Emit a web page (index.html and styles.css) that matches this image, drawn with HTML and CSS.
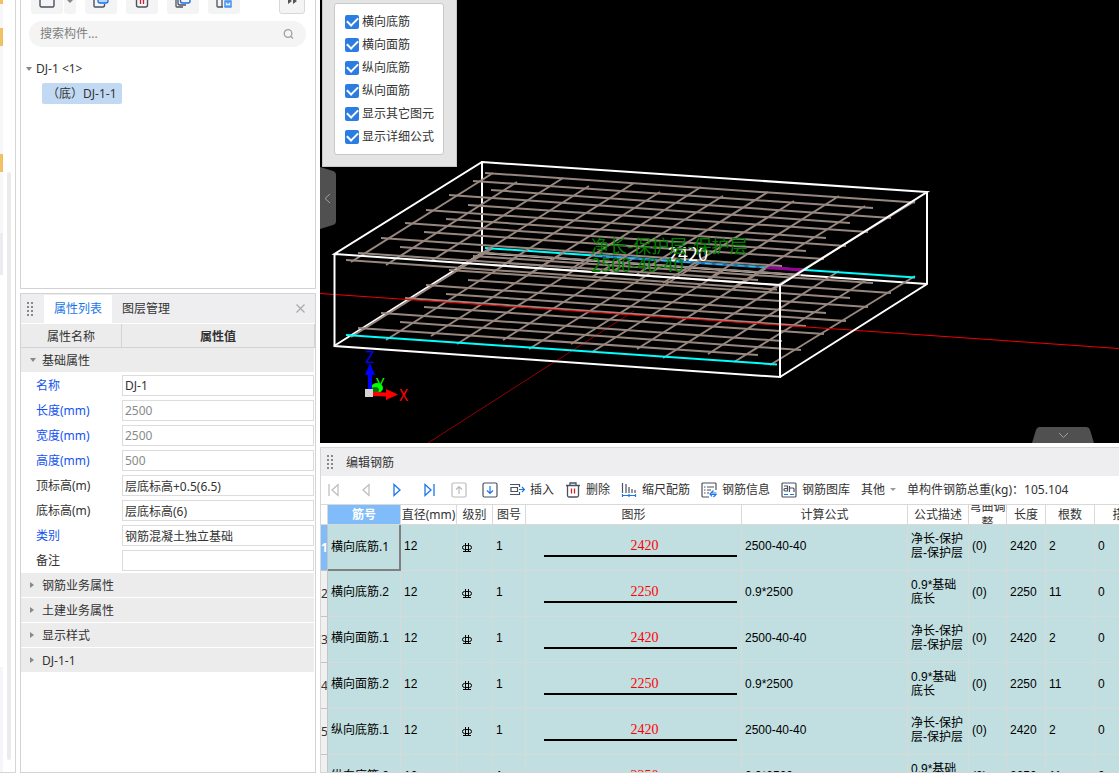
FILE: index.html
```html
<!DOCTYPE html>
<html lang="zh-CN">
<head>
  <meta charset="UTF-8" />
  <title>编辑钢筋</title>
  <link rel="stylesheet" href="styles.css">
</head>
<body>
  <!-- navigation strip -->
  <aside class="strip">
    <div class="strip-items">
      <i class="tag tag-cut"></i>
      <i class="tag"></i>
      <i class="tag tag-low"></i>
      <i class="block"></i>
      <i class="tail"></i>
    </div>
    <div class="scrollbar"></div>
  </aside>

  <div class="side">
    <section class="tree-panel">
      <div class="tree-tools">
        <button class="tool" aria-label="新建"><svg width="16" height="16" viewBox="0 0 16 16"><rect x="1" y="1" width="14" height="14" rx="1.5" fill="none" stroke="#4a5160" stroke-width="1.4"/></svg></button>
        <button class="tool drop" aria-label="更多新建"><svg width="6" height="16" viewBox="0 0 6 16"><path d="M0 8h6L3 11z" fill="#888"/></svg></button>
        <button class="tool" aria-label="复制"><svg width="16" height="16" viewBox="0 0 16 16"><path d="M4 6H1V14q0 1 1 1h8q1.500 0 1.500-2v-1" fill="none" stroke="#4a5160" stroke-width="1.400"/><path d="M5 1h10v8q0 2-2 2H7q-2 0-2-2z" fill="#b9d5fb" stroke="#1b6fe0" stroke-width="1.300"/></svg></button>
        <button class="tool" aria-label="删除"><svg width="16" height="16" viewBox="0 0 16 16"><path d="M2.500 3v10q0 2 2 2h7q2 0 2-2V3M0 3h16" fill="none" stroke="#4a5160" stroke-width="1.400"/><path d="M6.500 5v7M9.500 5v7" stroke="#d81e2c" stroke-width="1.300"/></svg></button>
        <button class="tool" aria-label="层间复制"><svg width="16" height="16" viewBox="0 0 16 16"><path d="M1 6v8q0 1 1 1h6M3 4v7q0 2 2 2h6" fill="none" stroke="#4a5160" stroke-width="1.300"/><path d="M5.500 1h9.500v8q0 2-2 2H7.500q-2 0-2-2z" fill="none" stroke="#1b6fe0" stroke-width="1.400"/></svg></button>
        <button class="tool" aria-label="存档"><svg width="16" height="16" viewBox="0 0 16 16"><path d="M1 1v13q0 1 1 1h5M6 3v12" fill="none" stroke="#4a5160" stroke-width="1.300"/><rect x="9" y="9" width="6" height="6" fill="#e4f0ff" stroke="#2b84ea" stroke-width="1.300"/><path d="M11 9v2h2V9M10 14h4" stroke="#2b84ea" fill="none"/></svg></button>
        <button class="tool more" aria-label="展开"><svg width="10" height="16" viewBox="0 0 10 16"><path d="M1 6l4 3-4 3zM6 6l4 3-4 3z" fill="#555"/></svg></button>
      </div>
      <div class="search">
        <input type="text" placeholder="搜索构件..." aria-label="搜索构件">
        <svg width="12" height="12" viewBox="0 0 12 12" fill="none" stroke="#a0a0a0" stroke-width="1.300"><circle cx="5" cy="5.500" r="3.800"/><path d="M8 8.500l2 2"/></svg>
      </div>
      <ul class="tree">
        <li><svg width="6" height="4" viewBox="0 0 6 4"><path d="M0 0h6L3 4z" fill="#888"/></svg>DJ-1 &lt;1&gt;</li>
        <li class="child"><span class="selected">（底）DJ-1-1</span></li>
      </ul>
    </section>

    <section class="props">
      <header class="dock-head">
        <svg class="grip" width="6" height="14" viewBox="0 0 6 14"><path d="M0 1h2M4 1h2M0 5h2M4 5h2M0 9h2M4 9h2M0 13h2M4 13h2" stroke="#888" stroke-width="2"/></svg>
        <button class="tab active">属性列表</button>
        <button class="tab">图层管理</button>
        <button class="close" aria-label="关闭"><svg width="9" height="9" viewBox="0 0 9 9"><path d="M.5.5l8 8M8.500.5l-8 8" stroke="#aaa" stroke-width="1.200"/></svg></button>
      </header>
      <div class="props-head"><span>属性名称</span><b>属性值</b></div>
      <button class="group open"><i></i>基础属性</button>
      <div class="field"><label class="blue" for="p1">名称</label><input id="p1" type="text" value="DJ-1"></div>
      <div class="field"><label class="blue" for="p2">长度(mm)</label><input id="p2" class="dim" type="text" value="2500"></div>
      <div class="field"><label class="blue" for="p3">宽度(mm)</label><input id="p3" class="dim" type="text" value="2500"></div>
      <div class="field"><label class="blue" for="p4">高度(mm)</label><input id="p4" class="dim" type="text" value="500"></div>
      <div class="field"><label for="p5">顶标高(m)</label><input id="p5" type="text" value="层底标高+0.5(6.5)"></div>
      <div class="field"><label for="p6">底标高(m)</label><input id="p6" type="text" value="层底标高(6)"></div>
      <div class="field"><label class="blue" for="p7">类别</label><input id="p7" type="text" value="钢筋混凝土独立基础"></div>
      <div class="field"><label for="p8">备注</label><input id="p8" type="text" value=""></div>
      <button class="group"><i></i>钢筋业务属性</button>
      <button class="group"><i></i>土建业务属性</button>
      <button class="group"><i></i>显示样式</button>
      <button class="group"><i></i>DJ-1-1</button>
    </section>
  </div>

  <main class="main">
    <section class="viewport">
      <svg class="scene" viewBox="320 0 799 443" preserveAspectRatio="xMinYMin slice">
        <defs>
          <g id="cross">
            <path d="M473 181L873 208M491 190L891 218M449 195L850 223M468 205L868 232M426 210L826 238M446 219L846 246M405 223L806 251M424 232L824 259M381 238L782 266M400 247L801 275M358 253L758 280"/>
          </g>
          <g id="along">
            <path d="M493 173L351 262M517 182L386 265M563 178L431 261M589 186L457 269M634 183L503 265M660 192L529 274M701 187L571 269M723 196L592 277M768 192L637 274M794 201L663 283M839 196L708 279M865 206L734 287M915 201L770 290"/>
          </g>
        </defs>
        <path d="M482 161V253L927 284M482 253L334 346" class="edge"/>
        <path d="M634 311L428 443" stroke="#960000" fill="none"/>
        <g class="bar">
          <use href="#cross" y="75"/>
          <use href="#along" y="75"/>
        </g>
        <path d="M320 293.500L1119 348.500" stroke="#f00000" fill="none"/>
        <path d="M485 248L915 277.500M346 335L777 364.500" class="cyan"/>
        <path d="M595 256L803 270" stroke="#2467ad" stroke-width="2"/>
        <path d="M595 256L803 270" stroke="#3ec4e8" stroke-dasharray="7 4"/>
        <path d="M766 267.500L804 270" stroke="#9b009b" stroke-width="3"/>
        <g class="bar">
          <use href="#cross"/>
          <use href="#along"/>
          <path d="M485 173L915 202.500M346 260L777 289.500"/>
        </g>
        <path d="M482 162L927 192L780 285L334.500 254ZM334.500 254V346L780 377V285M780 377L927 284V192" class="edge"/>
        <text x="668" y="261" fill="#fff">2420</text>
        <text x="591" y="253" fill="#008000">净长-保护层-保护层</text>
        <text x="591" y="272" fill="#008000">2500-40-40</text>
        <!-- axes -->
        <ellipse cx="377" cy="388" rx="6" ry="5" fill="#0f0"/>
        <ellipse cx="375" cy="390" rx="4" ry="3" fill="#087508"/>
        <path d="M368 390V375h-3L370 363l5 12h-3V390z" fill="#00f"/>
        <path d="M373 392l13 .5V389l12 5.500-12 5.500v-3.500l-13-.5z" fill="#f00"/>
        <path d="M365 389h8v8h-8z" fill="#d4d4d4"/>
        <text class="axis" x="365" y="363" fill="#00f">Z</text>
        <text class="axis" x="376" y="390" fill="#0f0">Y</text>
        <text class="axis" x="399" y="401" fill="#f00">X</text>
      </svg>

      <div class="filter">
        <div class="filter-box">
          <label><input type="checkbox" checked>横向底筋</label>
          <label><input type="checkbox" checked>横向面筋</label>
          <label><input type="checkbox" checked>纵向底筋</label>
          <label><input type="checkbox" checked>纵向面筋</label>
          <label><input type="checkbox" checked>显示其它图元</label>
          <label><input type="checkbox" checked>显示详细公式</label>
        </div>
      </div>
      <button class="handle-left" aria-label="收起左侧"><svg width="16" height="62" viewBox="0 0 16 62"><path d="M0 0l13 4q3 1 3 4v46q0 3-3 4L0 62z" fill="#505050"/><path d="M10 27l-5 4.500 5 4.500" fill="none" stroke="#a0a0a0"/></svg></button>
      <button class="handle-bottom" aria-label="收起下方"><svg width="62" height="16" viewBox="0 0 62 16"><path d="M0 16L4 3q1-3 4-3h46q3 0 4 3l4 13z" fill="#505050"/><path d="M27 6l4.500 4.500L36 6" fill="none" stroke="#a0a0a0"/></svg></button>
    </section>

    <section class="editor">
      <header class="dock-head">
        <svg class="grip" width="6" height="14" viewBox="0 0 6 14"><path d="M0 1h2M4 1h2M0 5h2M4 5h2M0 9h2M4 9h2M0 13h2M4 13h2" stroke="#888" stroke-width="2"/></svg>
        <h2>编辑钢筋</h2>
      </header>

      <div class="toolbar">
        <div class="nav">
          <button aria-label="首行"><svg width="16" height="16" viewBox="0 0 16 16" fill="none" stroke="#bbb" stroke-width="1.200"><path d="M2 2v12M11 2.500v11L5 8z"/></svg></button>
          <button aria-label="上一行"><svg width="16" height="16" viewBox="0 0 16 16" fill="none" stroke="#bbb" stroke-width="1.200"><path d="M11 2.500v11L5 8z"/></svg></button>
          <button aria-label="下一行"><svg width="16" height="16" viewBox="0 0 16 16" fill="none" stroke="#1b76e8" stroke-width="1.300"><path d="M5 2.500v11L11 8z"/></svg></button>
          <button aria-label="末行"><svg width="16" height="16" viewBox="0 0 16 16" fill="none" stroke="#1b76e8" stroke-width="1.300"><path d="M5 2.500v11L11 8zM14 2v12"/></svg></button>
          <button aria-label="上移"><svg width="16" height="16" viewBox="0 0 16 16" fill="none" stroke="#bbb" stroke-width="1.200"><rect x="1" y="1" width="14" height="14" rx="1.500"/><path d="M8 12V5M5 7.500l3-3 3 3"/></svg></button>
          <button aria-label="下移"><svg width="16" height="16" viewBox="0 0 16 16" fill="none" stroke-width="1.200"><rect x="1" y="1" width="14" height="14" rx="1.500" stroke="#4a5160"/><path d="M8 4v7M5 8.500l3 3 3-3" stroke="#1b76e8"/></svg></button>
        </div>
        <button><svg width="16" height="16" viewBox="0 0 16 16" fill="none" stroke="#4a5160" stroke-width="1.200"><path d="M11 2.500H1M1 12.500h10M10.500 2v3M10.500 10v3M8.500 5.500H2v4h6.500z"/><path d="M10 7.500h5.500M13 5l2.500 2.500L13 10" stroke="#1b76e8"/></svg>插入</button>
        <button><svg width="16" height="16" viewBox="0 0 16 16" fill="none" stroke="#4a5160" stroke-width="1.300"><path d="M1 3.500h14M5 3V1h6v2M2.500 4v9.500q0 1.500 1.500 1.500h8q1.500 0 1.500-1.500V4"/><path d="M6.500 6.500v5M9.500 6.500v5" stroke="#d81e2c"/></svg>删除</button>
        <button><svg width="16" height="16" viewBox="0 0 16 16" fill="none" stroke="#4a5160" stroke-width="1.200"><path d="M1.500 1v10M5 2v9M8 5v6M11 7v4M14 8v3"/><path d="M1.500 13.500h13M1.500 12v3M14.500 12v3M8 12v3" stroke="#1b76e8"/></svg>缩尺配筋</button>
        <button><svg width="16" height="16" viewBox="0 0 16 16" fill="none" stroke="#4a5160" stroke-width="1.200"><path d="M15 8V2q0-1-1-1H2Q1 1 1 2v12q0 1 1 1h6M3 5h1.500M6 5h7M3 8h1.500M6 8h4M3 11h1.500M6 11h2"/><path d="M12.500 8.500L10 11h5.500M9.500 12.500h5.500L12.500 15M10 11l-1 1 2 2.500" stroke="#1b76e8"/></svg>钢筋信息</button>
        <button><svg width="16" height="16" viewBox="0 0 16 16" fill="none" stroke="#4a5160" stroke-width="1.200"><rect x="1" y="1" width="14" height="14" rx="1"/><path d="M3 4h3.500v5H4Q3 9 3 7.800T4 6.500h2.500M8.500 10V4M8.500 6H12q1 0 1 1v3"/><path d="M3 12.500h4M9 12.500h4" stroke="#1b76e8"/></svg>钢筋图库</button>
        <button>其他<svg width="6" height="4" viewBox="0 0 6 4"><path d="M0 0h6L3 3z" fill="#999"/></svg></button>
        <span class="total">单构件钢筋总重(kg)：105.104</span>
      </div>

      <div class="table-wrap">
        <table>
          <colgroup>
            <col class="c-no"><col class="c-name"><col class="c-dia"><col class="c-lvl"><col class="c-fig"><col class="c-shape"><col class="c-formula"><col class="c-desc"><col class="c-bend"><col class="c-len"><col class="c-count"><col class="c-lap">
          </colgroup>
          <thead>
            <tr>
              <th></th><th class="current">筋号</th><th>直径(mm)</th><th>级别</th><th>图号</th><th>图形</th><th>计算公式</th><th>公式描述</th><th><div class="clip">弯曲调整</div></th><th>长度</th><th>根数</th><th>搭接</th>
            </tr>
          </thead>
          <tbody id="rebar-rows"></tbody>
        </table>
      </div>
    </section>
  </main>

  <script src="rows.js"></script>
</body>
</html>
```
FILE: rows.js
```js
const names = ['横向底筋.1', '横向底筋.2', '横向面筋.1', '横向面筋.2', '纵向底筋.1', '纵向底筋.2'];
const edge = { length: 2420, formula: '2500-40-40', desc: '净长-保护<br>层-保护层', count: 2 };
const middle = { length: 2250, formula: '0.9*2500', desc: '0.9*基础<br>底长', count: 11 };

const tbody = document.querySelector('#rebar-rows');
names.forEach((name, i) => {
  const bar = i % 2 ? middle : edge;
  const row = document.createElement('tr');
  if (i === 0) row.className = 'current';
  row.innerHTML = `
    <th>${i + 1}</th>
    <td>${name}</td>
    <td>12</td>
    <td><svg class="grade" width="10" height="10" viewBox="0 0 10 10" fill="none" stroke="#000"><path d="M2.500 2.500h5q2 0 2 2t-2 2h-5q-2 0-2-2t2-2zM3.500 0v8M6.500 0v8M1 8.500h8"/></svg></td>
    <td>1</td>
    <td class="shape"><span>${bar.length}</span></td>
    <td>${bar.formula}</td>
    <td class="desc">${bar.desc}</td>
    <td>(0)</td>
    <td>${bar.length}</td>
    <td>${bar.count}</td>
    <td>0</td>
  `;
  tbody.appendChild(row);
});
```
FILE: styles.css
```css
* {
  box-sizing: border-box;
}

body {
  margin: 0;
  height: 100vh;
  display: flex;
  overflow: hidden;
  background: #fff;
  color: #333;
  font-family: "Noto Sans", "Noto Sans CJK SC", sans-serif;
  font-size: 12px;
  line-height: 18px;
}

button {
  border: none;
  padding: 0;
  background: none;
  color: inherit;
  font: inherit;
  cursor: pointer;
}

svg {
  display: block;
  flex: none;
}

/* left strip */
.strip {
  width: 16px;
  margin: 0 4px 1px 0;
  flex: none;
  display: flex;
  border-right: 1px solid #d6d6d6;
  border-bottom: 1px solid #d6d6d6;
}

.strip-items {
  width: 3px;
  display: flex;
  flex-direction: column;
  background: linear-gradient(#f7f7fa 233px, #fff 233px);
}

.tag {
  height: 18px;
  margin-bottom: 108px;
  background: #f0c268;
  border-right: 1px solid #f2bd57;
}

.tag-cut {
  height: 4px;
  margin-bottom: 24px;
}

.tag-low {
  margin-bottom: 61px;
}

.block {
  height: 42px;
  background: #ececf0;
}

.tail {
  height: 105px;
  margin-top: auto;
  background: #f5f6f9;
}

.scrollbar {
  width: 4px;
  margin: 172px 0 12px 4px;
  border-radius: 2px;
  background: #ebebeb;
}

/* side column */
.side {
  width: 296px;
  margin: 0 4px 1px 0;
  flex: none;
  display: flex;
  flex-direction: column;
  gap: 4px;
}

.tree-panel {
  height: 289px;
  border: 1px solid #d3d3d6;
  border-top: none;
}

.tree-tools {
  height: 14px;
  padding: 0 10px;
  display: flex;
  align-items: flex-end;
  gap: 9px;
  overflow: hidden;
}

.tool {
  width: 32px;
  height: 28px;
  flex: none;
  display: flex;
  justify-content: center;
  align-items: center;
  border-radius: 3px;
  background: #f4f4f5;
}

.tool.drop {
  width: 12px;
  margin-left: -8px;
}

.tool.more {
  width: 26px;
  margin-left: auto;
  border: 1px solid #d8d8d8;
}

.search {
  margin: 7px 9px 0 8px;
  padding: 0 11px;
  height: 26px;
  display: flex;
  align-items: center;
  border-radius: 13px;
  background: #f4f4f4;
}

.search input {
  flex: 1;
  min-width: 0;
  padding: 0;
  border: none;
  background: none;
  font: inherit;
}

.search input::placeholder {
  color: #808080;
}

.tree {
  list-style: none;
  margin: 10px 0 0;
  padding: 0 5px;
}

.tree li {
  height: 24px;
  display: flex;
  align-items: center;
  gap: 4px;
}

.tree .child {
  padding-left: 16px;
}

.selected {
  height: 21px;
  line-height: 21px;
  padding: 0 5px;
  border-radius: 2px;
  background: #c1d9f3;
}

.dock-head {
  display: flex;
  align-items: center;
  background: #eeeef0;
}

.grip {
  margin: 0 14px 0 6px;
}

.props {
  flex: 1;
  min-height: 0;
  display: flex;
  flex-direction: column;
  border: 1px solid #d3d3d6;
}

.props .dock-head {
  height: 29px;
  margin-bottom: 1px;
}

.tab {
  height: 28px;
  padding: 0 10px;
}

.tab.active {
  background: #fff;
  color: #1b76e8;
}

.grip + .tab {
  margin-left: -3px;
}

.close {
  margin: 0 10px 0 auto;
}

.props-head {
  height: 24px;
  display: flex;
  text-align: center;
  line-height: 26px;
  background: #ececec;
  border-bottom: 1px solid #d3d3d6;
}

.props-head span {
  width: 101px;
  border-right: 1px solid #d3d3d6;
}

.props-head b {
  flex: 1;
  border-right: 1px solid #d3d3d6;
}

.group {
  height: 24px;
  margin: 0 1px 1px 0;
  padding: 2px 0 0 9px;
  flex: none;
  display: flex;
  align-items: center;
  gap: 6px;
  background: #ececec;
  text-align: left;
}

.group i {
  width: 6px;
  margin-bottom: 3px;
  border: 3px solid transparent;
  border-left: 4px solid #888;
  border-right: none;
}

.group.open i {
  border: 3px solid transparent;
  border-top: 4px solid #888;
  border-bottom: none;
}

.field {
  height: 25px;
  padding: 0 1px 0 15px;
  flex: none;
  display: flex;
  align-items: center;
}

.field label {
  width: 86px;
}

.field .blue {
  color: #1452f0;
}

.field input {
  flex: 1;
  min-width: 0;
  height: 21px;
  padding: 0 2px;
  border: 1px solid #dcdcdc;
  color: #333;
  font: inherit;
}

.field .dim {
  color: #8a8a8a;
}

/* right part */
.main {
  flex: 1;
  min-width: 0;
  display: flex;
  flex-direction: column;
}

.viewport {
  flex: 1;
  min-height: 0;
  position: relative;
  overflow: hidden;
  background: #000;
}

.scene {
  width: 100%;
  height: 100%;
  font-family: "Noto Sans CJK SC", sans-serif;
  font-size: 18px;
}

.scene .axis {
  font-size: 16px;
}

.edge {
  fill: none;
  stroke: #fff;
  stroke-width: 2;
}

.bar {
  fill: none;
  stroke: #97877f;
  stroke-width: 2;
}

.cyan {
  fill: none;
  stroke: #0ff;
  stroke-width: 2;
}

.filter {
  position: absolute;
  top: 0;
  left: 2px;
  padding: 3px 12px 11px 11px;
  border: 1px solid #c8c8c8;
  border-top: none;
  background: #e4e4e4;
}

.filter-box {
  padding: 6px 9px 6px 10px;
  border: 1px solid #c8c8c8;
  border-radius: 3px;
  background: #fff;
}

.filter label {
  height: 23px;
  display: flex;
  align-items: center;
  gap: 3px;
}

.filter input {
  appearance: none;
  width: 14px;
  height: 14px;
  margin: 0;
  display: grid;
  place-items: center;
  border-radius: 2px;
  background: #2b7de1;
}

.filter input:checked::after {
  content: "";
  width: 9px;
  height: 5px;
  margin-bottom: 3px;
  border: solid #fff;
  border-width: 0 0 2px 2px;
  transform: rotate(-45deg);
}

.handle-left {
  position: absolute;
  top: 167px;
  left: 0;
}

.handle-bottom {
  position: absolute;
  right: 25px;
  bottom: 0;
}

.editor {
  height: 326px;
  margin: 4px 0 1px;
  flex: none;
  display: flex;
  flex-direction: column;
  border: 1px solid #d6d6d6;
  border-right: none;
}

.editor .dock-head {
  height: 28px;
  flex: none;
}

.editor h2 {
  margin: 2px 0 0;
  font-size: 12px;
  font-weight: normal;
}

.editor .grip {
  margin-right: 13px;
}

.toolbar {
  height: 28px;
  padding-left: 6px;
  flex: none;
  display: flex;
  align-items: center;
  gap: 11px;
  white-space: nowrap;
}

.nav {
  display: flex;
  gap: 15px;
}

.toolbar button {
  display: flex;
  align-items: center;
  gap: 5px;
}

.table-wrap {
  flex: 1;
  min-height: 0;
  overflow: hidden;
}

table {
  width: 100%;
  min-width: 834px;
  table-layout: fixed;
  border-collapse: separate;
  border-spacing: 0;
}

.c-no { width: 7px; }
.c-name { width: 73px; }
.c-dia { width: 56px; }
.c-lvl { width: 36px; }
.c-fig { width: 33px; }
.c-shape { width: 216px; }
.c-formula { width: 166px; }
.c-desc { width: 61px; }
.c-bend { width: 38px; }
.c-len { width: 39px; }
.c-count { width: 49px; }

th, td {
  padding: 0;
  border-right: 1px solid #d9d9d9;
  border-bottom: 1px solid #d9d9d9;
}

thead th {
  height: 21px;
  border-top: 1px solid #d9d9d9;
  font-weight: normal;
  white-space: nowrap;
}

.clip {
  height: 19px;
  display: flex;
  align-items: center;
  line-height: 16px;
  white-space: normal;
  overflow: hidden;
}

thead .current {
  background: #80bbfa;
  color: #fff;
  font-weight: bold;
}

tbody td {
  height: 46px;
  padding: 0 0 4px 3px;
  background: #c1dfe1;
  color: #000;
  font-family: "Liberation Sans", "Noto Sans CJK SC", sans-serif;
}

tbody th {
  background: #f0f0f0;
  border-color: #c4c4c4;
  font-weight: normal;
  overflow: hidden;
}

.current th {
  background: #80bbfa;
  color: #fff;
  font-weight: bold;
}

.current th + td {
  padding-bottom: 0;
  border: solid #808080;
  border-width: 0 2px 2px 0;
  font-family: "Noto Sans", "Noto Sans CJK SC", sans-serif;
}

.grade {
  margin: 4px 0 0 2px;
}

tbody .shape {
  padding: 0 4px 0 18px;
}

.shape span {
  height: 18px;
  padding-left: 8px;
  display: block;
  border-bottom: 2px solid #000;
  color: #f00;
  font-family: "Liberation Serif", serif;
  font-size: 14px;
  line-height: 14px;
  text-align: center;
}

tbody .desc {
  line-height: 14px;
}
```
